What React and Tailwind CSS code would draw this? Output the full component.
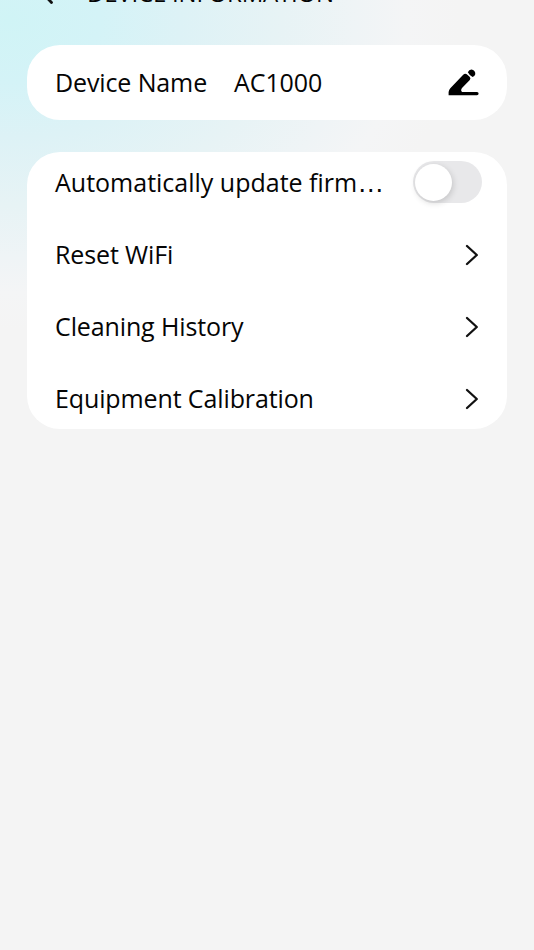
import { useState } from "react";

const links = ["Reset WiFi", "Cleaning History", "Equipment Calibration"];

function Chevron() {
  return (
    <svg width="14" height="22" viewBox="0 0 14 22" fill="none" className="mr-[2px]">
      <path
        d="M2 2 L11.8 11 L2 20"
        stroke="#111"
        strokeWidth="2.3"
        strokeLinecap="round"
        strokeLinejoin="round"
      />
    </svg>
  );
}

function EditIcon() {
  return (
    <svg width="32" height="28" viewBox="0 0 32 28" fill="#000">
      <path d="M15.2 5.8 Q17 4 18.8 5.3 L21.6 7.7 Q23.2 9.3 21.8 11 L14 19 Q12.2 21.4 14.2 23 H29 A1.6 1.6 0 0 1 29 26.2 H0.6 V23 Q0.9 20.8 2.3 19.2 Z" />
      <path d="M19.8 3.2 Q21.4 0 24.4 0.7 Q27.8 2.2 27.2 5.6 Q26.6 7.6 24.6 8 Q21.4 6.3 19.8 3.2 Z" />
    </svg>
  );
}

export default function App() {
  const [autoUpdate, setAutoUpdate] = useState(false);

  return (
    <div className="h-[950px] w-[534px] overflow-hidden bg-[#f4f4f4] bg-[radial-gradient(ellipse_450px_310px_at_10px_20px,#d0f4f6_0%,#d4f3f7_20%,#ddf2f6_38%,#e7f3f5_60%,#eff4f6_77%,#f4f5f6_88%,#f4f4f4_100%)] font-['Open_Sans','Noto_Sans',sans-serif] text-[25px] tracking-[-0.12px] text-[#050505]">
      <header className="flex h-[45px] items-start">
        <svg
          width="16"
          height="26"
          viewBox="0 0 16 26"
          fill="none"
          className="-mt-[21px] ml-[39px] shrink-0"
        >
          <path
            d="M12.5 2.5 L2.5 13 L12.5 23.5"
            stroke="#111"
            strokeWidth="2.8"
            strokeLinecap="round"
            strokeLinejoin="round"
          />
        </svg>
        <h1 className="-mt-[25px] ml-8 text-[24px] leading-[36px] font-medium tracking-[-0.2px] whitespace-nowrap">
          DEVICE INFORMATION
        </h1>
      </header>

      <main className="flex flex-col gap-8 px-[27px]">
        <section className="flex h-[75px] items-center rounded-[33px] bg-white pr-[27px] pl-7">
          <span>Device Name</span>
          <span className="ml-[27px]">AC1000</span>
          <button type="button" className="ml-auto">
            <EditIcon />
          </button>
        </section>

        <section className="flex h-[277px] flex-col gap-[10px] rounded-[33px] bg-white pl-7">
          <div className="flex h-[62px] shrink-0 items-center justify-between pr-[25px]">
            <span className="tracking-normal whitespace-nowrap">
              Automatically update firm
              <span className="font-['Liberation_Sans',sans-serif] text-[27px] leading-none">
                …
              </span>
            </span>
            <button
              type="button"
              role="switch"
              aria-checked={autoUpdate}
              onClick={() => setAutoUpdate(!autoUpdate)}
              className="mb-[2px] flex h-[42px] w-[69px] items-center rounded-full bg-[#e8e8ea] px-[2px]"
            >
              <span
                className={
                  autoUpdate
                    ? "ml-auto size-[37px] rounded-full bg-white"
                    : "size-[37px] rounded-full bg-white shadow-[1px_2px_6px_rgba(0,0,0,0.16)]"
                }
              />
            </button>
          </div>
          {links.map((label) => (
            <div
              key={label}
              className="flex h-[62px] shrink-0 items-center justify-between pr-[26px]"
            >
              <span>{label}</span>
              <Chevron />
            </div>
          ))}
        </section>
      </main>
    </div>
  );
}
